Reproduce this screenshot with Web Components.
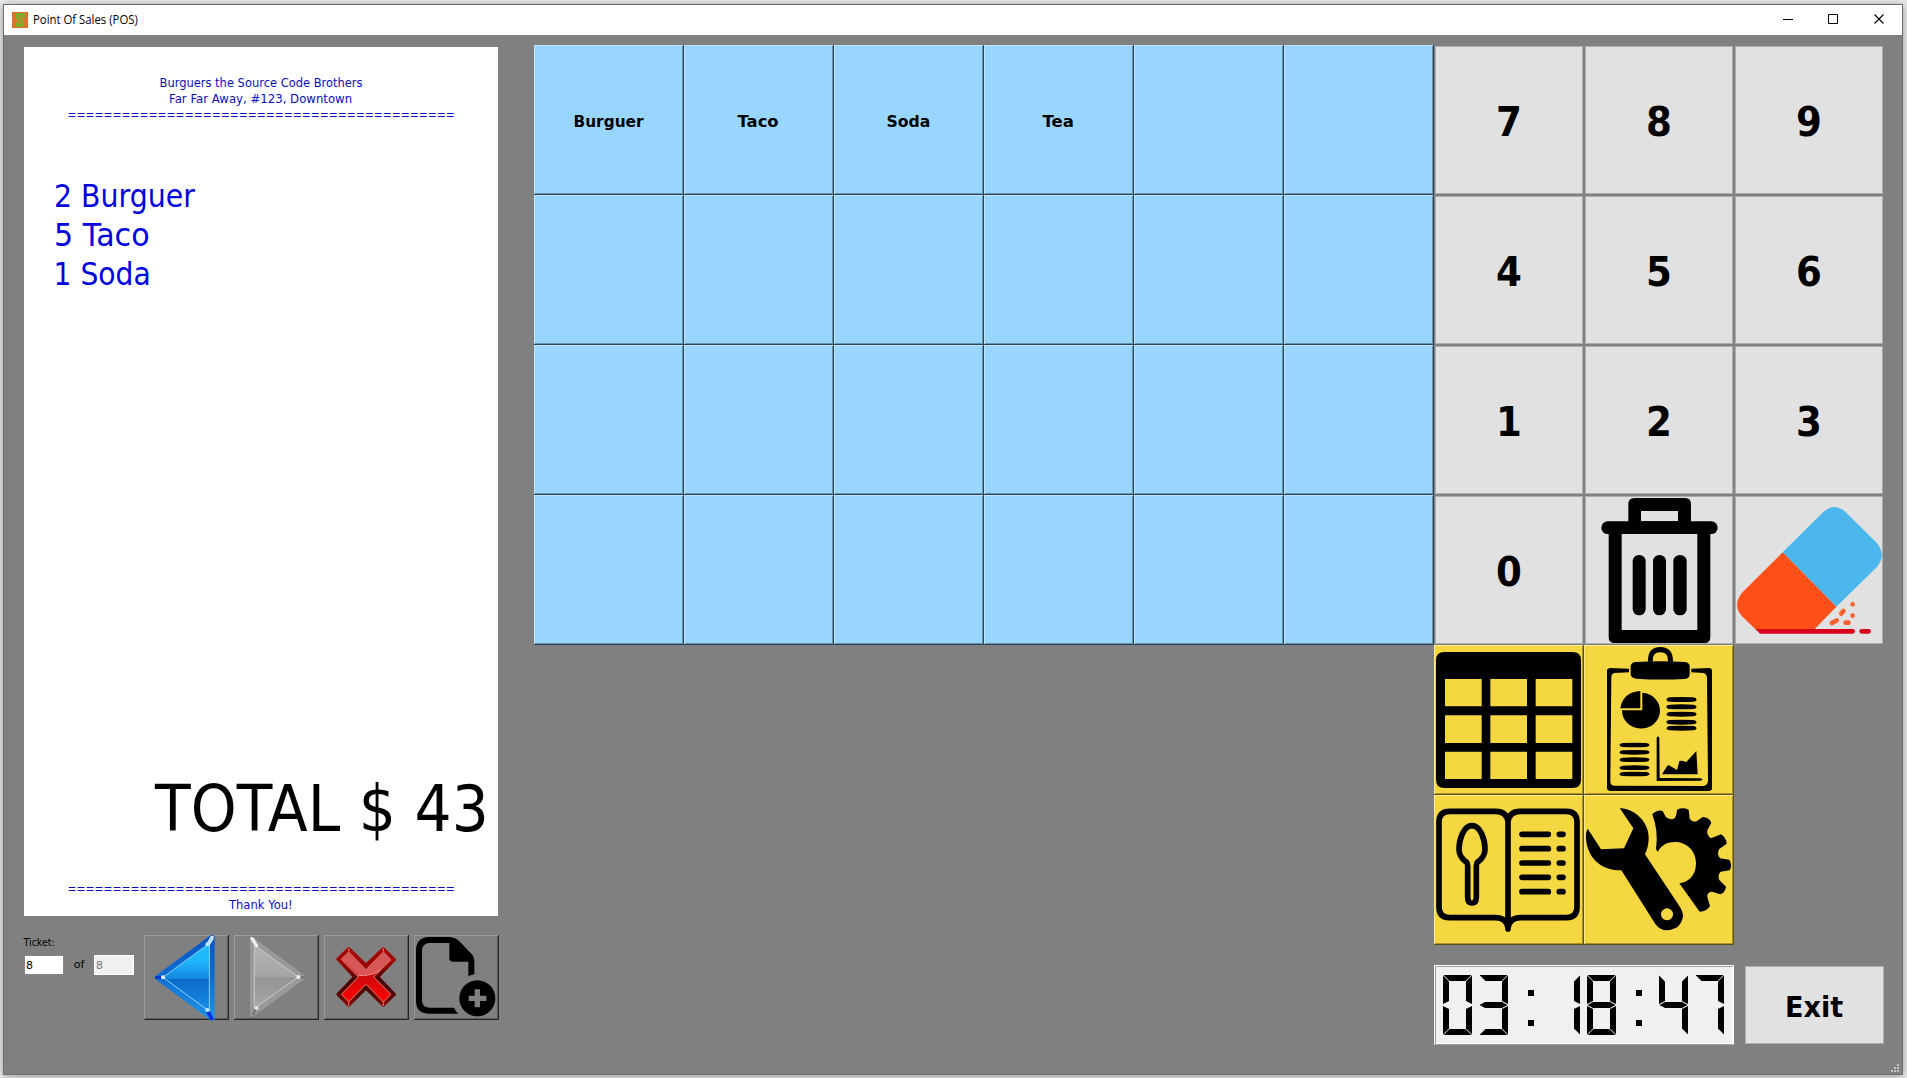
<!DOCTYPE html>
<html lang="en">
<head>
<meta charset="utf-8">
<title>Point Of Sales (POS)</title>
<style>
  body { margin: 0; width: 1907px; height: 1078px; overflow: hidden; background: #ebebeb; padding: 4px 0 0 3px; box-sizing: border-box; }
</style>
</head>
<body>
<pos-window></pos-window>
<script>
const UI = '"DejaVu Sans", "Liberation Sans", sans-serif';
const define = (name, html, init) => {
  const template = document.createElement('template');
  template.innerHTML = html;
  customElements.define(name, class extends HTMLElement {
    constructor() {
      super();
      this.attachShadow({ mode: 'open' }).append(template.content.cloneNode(true));
    }
    connectedCallback() { if (init) init.call(this, this.shadowRoot); }
  });
};

/* One line of text condensed or widened to the width given in "w". */
define('fit-text', `
  <style>
    :host { display: flex; justify-content: center; white-space: pre; line-height: inherit; }
    span { display: block; flex: none; transform-origin: center; }
  </style><span></span>`, function (root) {
  const span = root.querySelector('span');
  span.textContent = this.getAttribute('text');
  const w = +this.getAttribute('w');
  this.style.width = w + 'px';
  span.style.transform = 'scaleX(' + w / span.offsetWidth + ')';
});

const ICONS = {
  trash: `<path fill-rule="evenodd" d="M133 98V27Q133 9 151 9H303Q321 9 321 27V98ZM171 48V79H282V48Z"/>
    <rect x="52" y="79" width="349" height="38" rx="19"/>
    <path fill-rule="evenodd" d="M74 98H379V426Q379 444 361 444H92Q74 444 74 426ZM113 117V405H340V117Z"/>
    <rect x="146" y="180" width="39" height="181" rx="19"/><rect x="207" y="180" width="39" height="181" rx="19"/><rect x="268" y="180" width="40" height="181" rx="19"/>`,
  eraser: `<path fill="#4bb7ec" d="M146 172 264 55Q300 18 337 53L428 143Q459 180 428 217L307 335Z"/>
    <path fill="#ff5019" d="M146 172 27 290Q-7 328 24 364L66 404H240L307 335Z"/>
    <path fill="#d9001b" d="M64 402H356A7 7 0 0 1 356 416H78Z"/><rect x="376" y="402" width="35" height="14" rx="7" fill="#d9001b"/>
    <g fill="#f4602f"><circle cx="356" cy="328" r="7"/><circle cx="356" cy="362" r="7"/>
    <rect x="313" y="345" width="24" height="14" rx="7" transform="rotate(-50 325 352)"/><rect x="286" y="373" width="30" height="14" rx="7" transform="rotate(-27 301 380)"/><rect x="328" y="376" width="22" height="14" rx="7"/></g>`,
  table: `<path fill-rule="evenodd" d="M31 21H416Q441 21 441 46V404Q441 429 416 429H31Q6 429 6 404V46Q6 21 31 21ZM33 102V184H143V102ZM169 102V184H279V102ZM305 102V184H415V102ZM33 211V294H143V211ZM169 211V294H279V211ZM305 211V294H415V211ZM33 320V402H143V320ZM169 320V402H279V320ZM305 320V402H415V320Z"/>`,
  report: `<path fill-rule="evenodd" d="M69 74Q72 69 80 69L135 71V82L90 84Q83 86 82 94L79 410Q80 422 92 422L360 423Q371 420 372 408L369 98Q368 86 358 84L322 82V71L376 69Q384 70 384 78V432Q383 438 374 438H80Q69 437 69 430Z"/>
    <path d="M192 50Q190 7 229 6Q268 7 267 50H252Q254 22 229 22Q204 22 206 50Z"/>
    <path d="M155 51Q228 47 303 51Q317 53 317 64V89Q316 101 300 102Q228 106 156 101Q141 99 140 88V63Q142 52 155 51Z"/>
    <path d="M175 143A57 54 0 1 1 114 196H175Z"/><path d="M169 190H109C113 160 134 139 169 138Z"/>
    <g>${[164, 184, 208, 230, 250].map((y, i) => `<path d="M247 ${y}q2-${i % 2 ? 5 : 6} 10-${i % 2 ? 5 : 7}q35-2 71 0q9 1 10 7q-2 6-10 6q-35 2-71 0q-8 0-10-6Z"/>`).join('')}
    ${[300, 322, 344, 368, 387].map(y => `<path d="M106 ${y}q2-5 10-6q35-2 71 0q9 1 10 6q-2 5-10 6q-35 2-71 0q-8 0-10-6Z"/>`).join('')}</g>
    <path d="M218 278Q222 271 226 278L227 399 350 400Q361 404 350 407L218 408Z"/>
    <path d="M234 388 250 362Q254 359 260 364L279 375 286 349Q289 345 307 351L337 318 341 388Z"/>`,
  menu: `<g fill="none" stroke="#000" stroke-width="17" stroke-linecap="round" stroke-linejoin="round">
    <path d="M222 80Q218 49 185 49H47Q15 49 15 81V336Q15 368 47 368H185Q218 369 222 399Q226 369 259 368H397Q429 368 429 336V81Q429 49 397 49H259Q226 49 222 80V402"/>
    <path d="M114 92C88 92 75 135 75 163C75 188 91 196 98 202Q101 205 101 212V305Q101 324 114 324Q127 324 127 305V212Q127 205 130 202C137 196 153 188 153 163C153 135 140 92 114 92Z"/>
    <path d="M264 118h79M376 118h11M264 161h79M376 161h11M264 204h79M376 204h11M264 247h79M376 247h11M264 290h79M376 290h11"/></g>`,
  tools: `<path fill-rule="evenodd" d="M107 39C160 43 197 88 194 133Q193 158 183 178L288 336Q300 356 296 369A46 46 0 0 1 214 387L112 226C55 228 5 190 6 120Q7 108 11 101L51 163 120 160 148 100ZM249 340A18 18 0 1 0 249.100 340Z"/>
    <path d="M205 58Q220 43 236 48L246 67Q254 74 268 72Q278 66 279 44Q297 36 314 44L317 71Q326 83 338 79L356 66Q377 68 382 84L370 106Q368 122 381 130L411 118Q426 127 428 146L405 163Q398 180 408 190L436 194Q446 210 437 226L410 230Q400 240 406 255L426 275Q424 292 409 298L384 290Q368 292 370 306L378 333Q368 350 347 350L286 265C320 261 336 235 336 205C336 165 305 141 273 141C250 141 232 150 222 170Q216 168 216 160Q224 110 205 58Z"/>`,
  previous: `<defs><linearGradient id="o" x1="0" y1="0" x2="0" y2="1"><stop offset="0" stop-color="#0a52c4"/><stop offset=".5" stop-color="#0f6fd2"/><stop offset="1" stop-color="#1f96e6"/></linearGradient>
    <linearGradient id="i" x1="0" y1="0" x2="0" y2="1"><stop offset="0" stop-color="#1ec0ff"/><stop offset=".25" stop-color="#20b6fd"/><stop offset=".52" stop-color="#1188e0"/><stop offset=".53" stop-color="#0b68cb"/><stop offset="1" stop-color="#1790ea"/></linearGradient></defs>
    <path fill="url(#o)" d="M33 124 196 4Q204-2 212 2V254Q206 257 198 254L33 131Z"/>
    <path d="M34 123H52L56 127 52 132H34Z" fill="#0b36cf"/><path d="M185 229 196 225 210 253 200 257Z" fill="#0a2fe0"/>
    <path fill="url(#i)" stroke="#8fd0fa" stroke-width="3" stroke-linejoin="round" d="M57 127 196 25V229Z"/>
    <path d="M187 26 200 3H210L208 14 196 32Z" fill="#c4e2fc"/><circle cx="57" cy="127" r="6" fill="#e0f4ff"/><circle cx="190" cy="28" r="6" fill="#bfe9ff"/><circle cx="190" cy="225" r="6" fill="#bfe9ff"/>`,
  next: `<defs><linearGradient id="g" x1="0" y1="0" x2="0" y2="1"><stop offset="0" stop-color="#b4b4b4"/><stop offset=".5" stop-color="#a4a4a4"/><stop offset=".52" stop-color="#949494"/><stop offset="1" stop-color="#a8a8a8"/></linearGradient></defs>
    <path fill="#999" d="M48 10Q52 4 60 9L213 122V131L60 242Q52 248 48 241Z"/>
    <path fill="url(#g)" stroke="#cacaca" stroke-width="3" stroke-linejoin="round" d="M61 30 193 126 61 220Z"/>
    <path d="M49 7Q55 4 60 10L72 31 65 36 50 14Z" fill="#eee"/><path d="M60 221 68 224 60 241 54 241Z" fill="#777"/>
    <circle cx="193" cy="126" r="6" fill="#f4f4f4"/><circle cx="68" cy="32" r="5" fill="#eee"/><circle cx="68" cy="219" r="6" fill="#e2e2e2"/><path d="M201 122 213 124V130L202 131Z" fill="#777"/>`,
  remove: `<defs><linearGradient id="r" gradientUnits="userSpaceOnUse" x1="0" y1="37" x2="0" y2="217"><stop offset="0" stop-color="#a80505"/><stop offset=".3" stop-color="#900"/><stop offset=".55" stop-color="#400"/><stop offset=".8" stop-color="#500"/><stop offset="1" stop-color="#980404"/></linearGradient>
    <linearGradient id="x" x1="0" y1="0" x2="0" y2="1"><stop offset="0" stop-color="#c01318"/><stop offset=".5" stop-color="#cf0a0a"/><stop offset="1" stop-color="#f00"/></linearGradient></defs>
    <path fill="url(#r)" stroke="url(#r)" stroke-width="8" stroke-linejoin="round" d="M41 72 74 40 126 90 178 40 212 74 162 126 212 178 178 212 126 160 74 212 41 178 91 126Z"/>
    <path fill="url(#x)" d="M52 73 74 51 126 104 178 51 201 74 149 126 201 178 178 201 126 148 74 201 52 178 103 126Z"/>
    <path d="M54 73 74 53 126 105 178 53 199 74 165 108Q143 123 104 122Z" fill="#fff" fill-opacity=".3"/>
    <path d="M103 122Q147 123 170 104" fill="none" stroke="#f5a0a0" stroke-width="2.500"/>
    <path fill="none" stroke="#f0a080" stroke-width="2.500" d="M52 73 74 51 126 104 178 51 201 74 149 126 201 178 178 201 126 148 74 201 52 178 103 126Z"/>
    <path d="M74 40V50M178 40V50M74 202V213M178 202V213" stroke="#e0605a" stroke-width="4"/>`,
  add: `<path d="M44 6H106Q124 7 136 19L170 54Q181 65 181 78V118Q172 119 163 124V80H116Q106 80 106 70V24H47Q24 25 24 48V196Q24 218 46 218H120Q124 228 133 236H42Q6 234 6 198V44Q8 8 44 6Z"/>
    <path fill-rule="evenodd" d="M190 136A54 54 0 1 1 189.900 136ZM182 163V182H164V198H182V217H198V198H217V182H198V163Z"/>`
};

define('pos-icon', `<style>:host{display:block} svg{display:block;width:100%;height:100%;overflow:visible}</style><svg></svg>`, function (root) {
  const size = this.getAttribute('size') || 450;
  const svg = root.querySelector('svg');
  svg.setAttribute('viewBox', `0 0 ${size} ${size}`);
  svg.innerHTML = ICONS[this.getAttribute('name')];
});

/* Raised tile of the product grid and the tool grid. */
define('bevel-tile', `<style>
  :host { display: flex; align-items: center; justify-content: center; box-sizing: border-box; background: var(--face);
    box-shadow: inset -1px -1px var(--edge), inset 1px 1px var(--light), inset -2px -2px var(--shade); }
</style><slot></slot>`);

define('flat-key', `<style>
  :host { display: flex; align-items: center; justify-content: center; box-sizing: border-box; background: #e1e1e1; border: 1px solid #adadad; margin: 1px;
    font: bold 40px/48px ${UI}; color: #000; }
  ::slotted(fit-text) { margin-top: 4px; }
</style><slot></slot>`);

define('title-bar', `<style>
  :host { display: flex; align-items: center; height: 30px; background: #fff; padding: 0 16px 0 8px; font: 12px/16px "Open Sans", "Noto Sans", sans-serif; color: #000; }
  .logo { width: 16px; height: 16px; margin-right: 5px; }
  .spacer { flex: 1; }
  .controls { display: flex; gap: 34px; margin-top: -2px; margin-right: 1px; }
  svg { display: block; }
</style>
<svg class="logo" viewBox="0 0 16 16"><rect width="16" height="16" fill="#dc7430"/><path d="M4 1h9v5h-3l-1-2-1 1 4 4v4l-1 2H4v-5h2l1 2h1V10L4 7V2Z" fill="#7fae28"/><path d="M6 3l5 9" stroke="#b98d2a" fill="none"/></svg>
<fit-text w="105" text="Point Of Sales (POS)"></fit-text><div class="spacer"></div>
<div class="controls">
<svg width="11" height="11"><path d="M0 5.500H10" stroke="#000"/></svg>
<svg width="11" height="11" style="margin-right:1px"><path d="M.5.500H9.500V9.500H.5Z" fill="none" stroke="#000"/></svg>
<svg width="11" height="11"><path d="M.5.500 9.500 9.500M9.500.500.5 9.500" stroke="#000" stroke-width="1.100"/></svg></div>`);

define('receipt-paper', `<style>
  :host { display: flex; flex-direction: column; box-sizing: border-box; width: 474px; height: 869px; background: #fff; padding: 28px 0 3px; font: 13px/16px ${UI}; color: #0d0dbe; }
  .small { display: flex; flex-direction: column; align-items: center; }
  .items { display: flex; flex-direction: column; align-items: flex-start; margin: 54px 0 0 30px; font-size: 32px; line-height: 39px; color: #0000de; flex: 1; }
  .total { display: flex; justify-content: flex-end; padding-right: 9px; margin-bottom: 33px; font-size: 64px; line-height: 77px; color: #000; }
</style>
<div class="small"><fit-text w="203" text="Burguers the Source Code Brothers"></fit-text><fit-text w="183" text="Far Far Away, #123, Downtown"></fit-text><fit-text w="387" text="==========================================="></fit-text></div>
<div class="items"><fit-text w="141" text="2 Burguer"></fit-text><fit-text w="96" text="5 Taco"></fit-text><fit-text w="97" text="1 Soda"></fit-text></div>
<div class="total"><fit-text w="334" text="TOTAL $ 43"></fit-text></div>
<div class="small"><fit-text w="387" text="==========================================="></fit-text><fit-text w="64" text="Thank You!"></fit-text></div>`);

define('ticket-bar', `<style>
  :host { display: flex; width: 475px; margin-top: 19px; font: 11px/13px ${UI}; color: #000; }
  .ticket { width: 120px; padding-top: 1px; box-sizing: border-box; }
  .row { display: flex; align-items: center; margin-top: 6px; }
  .field { display: flex; align-items: center; box-sizing: border-box; width: 40px; height: 20px; border: 1px solid #858585; background: #fff; padding: 1px 0 0 1px; }
  .field.off { background: #f0f0f0; border: 1px solid #fff; color: #777; }
  .of { width: 30px; display: flex; justify-content: center; margin-top: -2px; }
  .buttons { display: flex; gap: 5px; }
  bevel-tile { width: 85px; height: 85px; --face: #808080; --light: #9c9c9c; --edge: #262626; --shade: #5c5c5c; }
  pos-icon { width: 85px; height: 85px; }
</style>
<div class="ticket"><fit-text w="31" text="Ticket:"></fit-text>
<div class="row"><div class="field"><fit-text w="7" text="8"></fit-text></div><div class="of"><fit-text w="11" text="of"></fit-text></div><div class="field off"><fit-text w="7" text="8"></fit-text></div></div></div>
<div class="buttons"><bevel-tile><pos-icon name="previous" size="255"></pos-icon></bevel-tile><bevel-tile><pos-icon name="next" size="255"></pos-icon></bevel-tile><bevel-tile><pos-icon name="remove" size="255"></pos-icon></bevel-tile><bevel-tile><pos-icon name="add" size="255"></pos-icon></bevel-tile></div>`);

define('product-grid', `<style>
  :host { display: grid; grid-template-columns: repeat(6, 150px); grid-auto-rows: 150px; font: bold 16px/20px ${UI}; color: #000;
    --face: #99d6ff; --light: #bfe4fc; --edge: #2a4558; --shade: #6792b0; align-content: start; }
  fit-text { margin: 3px 1px 0 0; }
</style>`, function (root) {
  const products = [['Burguer', 70], ['Taco', 41], ['Soda', 44], ['Tea', 31]];
  for (let i = 0; i < 24; i++) {
    const tile = document.createElement('bevel-tile');
    if (products[i]) tile.innerHTML = `<fit-text text="${products[i][0]}" w="${products[i][1]}"></fit-text>`;
    root.append(tile);
  }
});

/* Seven-segment digit: every segment fills the cell and is clipped to its shape. */
const SEGMENTS = {
  a: '.5px 0,28.500px 0,22.500px 6px,6.500px 6px', f: '0 .5px,6px 6.500px,6px 26px,0 29px', b: '29px .5px,23px 6.500px,23px 26px,29px 29px',
  g: '.5px 30px,6px 27px,23px 27px,28.500px 30px,23px 33px,6px 33px', e: '0 31px,6px 34px,6px 53.500px,0 59.500px',
  c: '29px 31px,23px 34px,23px 53.500px,29px 59.500px', d: '.5px 60px,6.500px 54px,22.500px 54px,28.500px 60px',
  p: '13px 15px,19px 15px,19px 21px,13px 21px', q: '13px 45px,19px 45px,19px 51px,13px 51px'
};
const GLYPHS = { 0: 'abcdef', 1: 'bc', 3: 'abcdg', 4: 'bcfg', 7: 'abc', 8: 'abcdefg', ':': 'pq' };
define('lcd-digit', `<style>:host{display:grid;flex:none;width:29px;height:60px} i{grid-area:1/1;background:#000}</style>`, function (root) {
  for (const s of GLYPHS[this.getAttribute('value')]) {
    const seg = document.createElement('i');
    seg.style.clipPath = `polygon(${SEGMENTS[s]})`;
    root.append(seg);
  }
});
define('lcd-clock', `<style>
  :host { display: flex; gap: 7px; box-sizing: border-box; width: 300px; height: 80px; padding: 9px 7px 8px 8px; background: #f0f0f0; border: 1px solid #fff; border-bottom-color: #a0a0a0;
    box-shadow: inset 1px 1px #a0a0a0, inset -1px -1px #fff; }
</style>`, function (root) {
  this.setAttribute('role', 'img');
  this.setAttribute('aria-label', this.getAttribute('time'));
  for (const ch of this.getAttribute('time')) {
    const d = document.createElement('lcd-digit');
    d.setAttribute('value', ch);
    root.append(d);
  }
});

define('control-panel', `<style>
  :host { display: block; width: 450px; }
  .keys { display: grid; grid-template-columns: repeat(3, 150px); grid-auto-rows: 150px; }
  .tools { display: grid; grid-template-columns: repeat(2, 150px); grid-auto-rows: 150px; --face: #f5d742; --light: #faea94; --edge: #5c501a; --shade: #a8932f; }
  pos-icon { width: 150px; height: 150px; flex: none; }
  .foot { display: flex; align-items: center; margin-top: 20px; gap: 11px; }
  .exit { width: 139px; height: 78px; margin: 0; font-size: 29px; line-height: 35px; }
</style>
<div class="keys"></div>
<div class="tools"><bevel-tile><pos-icon name="table"></pos-icon></bevel-tile><bevel-tile><pos-icon name="report"></pos-icon></bevel-tile><bevel-tile><pos-icon name="menu"></pos-icon></bevel-tile><bevel-tile><pos-icon name="tools"></pos-icon></bevel-tile></div>
<div class="foot"><lcd-clock time="03:18:47"></lcd-clock><flat-key class="exit"><fit-text w="58" text="Exit"></fit-text></flat-key></div>`, function (root) {
  const keys = root.querySelector('.keys');
  for (const k of ['7', '8', '9', '4', '5', '6', '1', '2', '3', '0', 'trash', 'eraser']) {
    const key = document.createElement('flat-key');
    key.innerHTML = k.length > 1 ? `<pos-icon name="${k}"></pos-icon>` : `<fit-text w="26" text="${k}"></fit-text>`;
    keys.append(key);
  }
});

define('pos-window', `<style>
  :host { display: block; position: relative; box-sizing: border-box; width: 1900px; height: 1071px; border: 1px solid #6e6e6e; background: #808080; box-shadow: 0 1px 8px rgba(0,0,0,.38); }
  main { display: flex; align-items: flex-start; padding: 10px 0 0 20px; }
  .left { display: flex; flex-direction: column; width: 475px; margin: 2px 35px 0 0; }
  .grip { position: absolute; right: 3px; bottom: 2px; display: block; }
</style>
<title-bar></title-bar>
<main><div class="left"><receipt-paper></receipt-paper><ticket-bar></ticket-bar></div><product-grid></product-grid><control-panel></control-panel></main>
<svg class="grip" width="8" height="8"><path fill="#c4c4c4" d="M6 0h2v2h-2zM3 3h2v2h-2zM6 3h2v2h-2zM0 6h2v2h-2zM3 6h2v2h-2zM6 6h2v2h-2z"/></svg>`);
</script>
</body>
</html>
